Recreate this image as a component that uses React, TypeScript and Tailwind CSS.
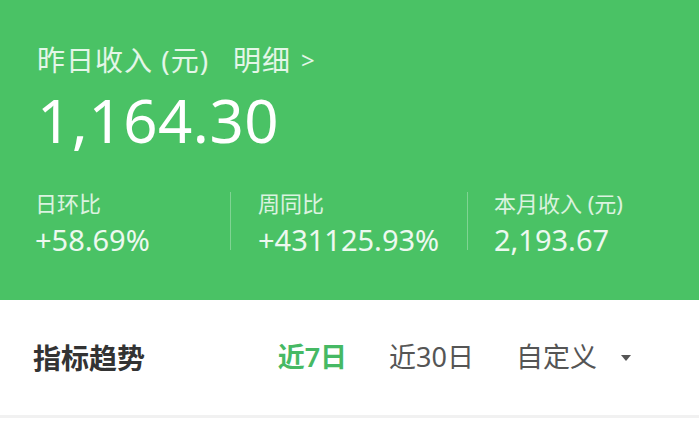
export default function App() {
  return (
    <div
      className="w-[699px] h-[425px] overflow-hidden bg-white"
      style={{ fontFamily: '"Noto Sans", "Noto Sans CJK SC", sans-serif' }}
    >
      <div className="h-[300px] bg-[#4ac265] px-[37px] pt-[40px] text-white">
        <div className="flex items-center h-[40px] text-[28px] text-white/85">
          <span className="tracking-[1px]">昨日收入 (元)</span>
          <span className="ml-[24px] tracking-[1px]">明细</span>
          <span className="ml-[10px] text-[24px]">&gt;</span>
        </div>
        <div className="mt-[4px] h-[72px] text-[60px] leading-[72px] tracking-[0.5px]">1,164.30</div>
        <div className="mt-[32px] flex">
          <div className="w-[195px] -ml-[2px]">
            <div className="text-[22px] leading-[30px] text-white/80">日环比</div>
            <div className="mt-[4px] text-[29px] leading-[36px] text-white/90">+58.69%</div>
          </div>
          <div className="w-px h-[58px] mt-[4px] bg-white/30" />
          <div className="w-[236px] pl-[27px]">
            <div className="text-[22px] leading-[30px] text-white/80">周同比</div>
            <div className="mt-[4px] text-[29px] leading-[36px] text-white/90">+431125.93%</div>
          </div>
          <div className="w-px h-[58px] mt-[4px] bg-white/30" />
          <div className="pl-[26px]">
            <div className="text-[22px] leading-[30px] text-white/80">本月收入 (元)</div>
            <div className="mt-[4px] text-[29px] leading-[36px] text-white/90">2,193.67</div>
          </div>
        </div>
      </div>
      <div className="h-[118px] flex items-center px-[33px] border-b-[3px] border-[#f1f1f1]">
        <span className="text-[28px] font-bold text-[#333]">指标趋势</span>
        <div className="ml-auto flex items-center text-[27px] text-[#555] pr-[34px]">
          <span className="text-[#46b964] font-semibold">近7日</span>
          <span className="ml-[42px]">近30日</span>
          <span className="ml-[42px]">自定义</span>
          <svg className="ml-[23px]" width="12" height="8" viewBox="0 0 12 8">
            <path d="M1 1h10L6 7z" fill="#555" />
          </svg>
        </div>
      </div>
    </div>
  );
}
